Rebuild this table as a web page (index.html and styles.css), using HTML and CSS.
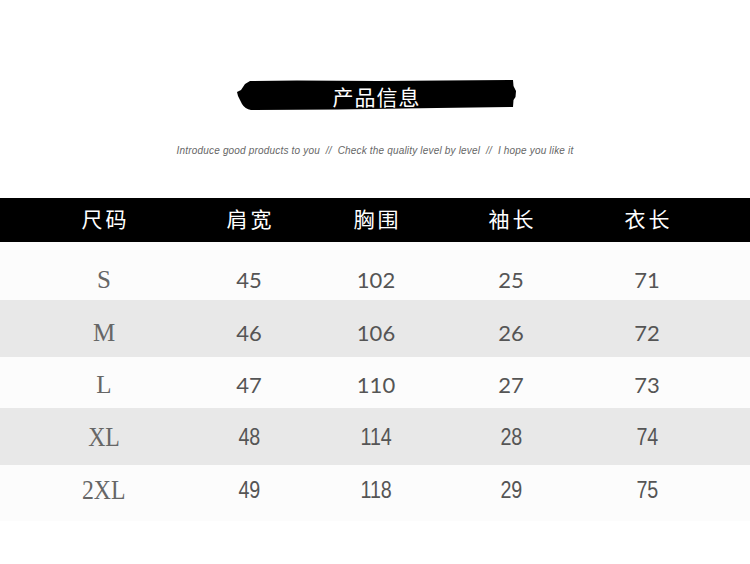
FILE: index.html
```html
<!DOCTYPE html>
<html lang="zh">
<head>
<meta charset="utf-8">
<title>产品信息</title>
<link rel="stylesheet" href="styles.css">
</head>
<body>
<div class="page">
  <div class="banner-wrap">
    <div class="banner">
      <svg class="banner-bg" viewBox="0 0 280 31" preserveAspectRatio="none" aria-hidden="true">
        <path d="M13 1 L60 0.5 L140 1 L276 0 L276.5 6 L279 11 L278.5 17 L276.5 20 L276 27 L200 28 L100 29.5 L14 30 Q8 29 5 24 L1 16 L0 12 L4 10 L8 4 Z" fill="#000"/>
      </svg>
      <span class="banner-text">产品信息</span>
    </div>
  </div>
  <p class="subtitle">Introduce good products to you&nbsp; //&nbsp; Check the quality level by level&nbsp; //&nbsp; I hope you like it</p>

  <div class="table">
    <div class="row head">
      <div class="cell">尺码</div>
      <div class="cell">肩宽</div>
      <div class="cell">胸围</div>
      <div class="cell">袖长</div>
      <div class="cell">衣长</div>
    </div>
    <div class="row r1">
      <div class="cell size">S</div>
      <div class="cell num">45</div>
      <div class="cell num">102</div>
      <div class="cell num">25</div>
      <div class="cell num">71</div>
    </div>
    <div class="row r2 alt">
      <div class="cell size">M</div>
      <div class="cell num">46</div>
      <div class="cell num">106</div>
      <div class="cell num">26</div>
      <div class="cell num">72</div>
    </div>
    <div class="row r3">
      <div class="cell size">L</div>
      <div class="cell num">47</div>
      <div class="cell num">110</div>
      <div class="cell num">27</div>
      <div class="cell num">73</div>
    </div>
    <div class="row r4 alt narrow">
      <div class="cell size"><span>XL</span></div>
      <div class="cell num"><span>48</span></div>
      <div class="cell num"><span>114</span></div>
      <div class="cell num"><span>28</span></div>
      <div class="cell num"><span>74</span></div>
    </div>
    <div class="row r5 narrow">
      <div class="cell size"><span>2XL</span></div>
      <div class="cell num"><span>49</span></div>
      <div class="cell num"><span>118</span></div>
      <div class="cell num"><span>29</span></div>
      <div class="cell num"><span>75</span></div>
    </div>
  </div>
</div>
</body>
</html>
```
FILE: styles.css
```css
html, body {
  margin: 0;
  padding: 0;
  background: #fff;
}
.page {
  width: 750px;
  height: 564px;
  background: #fff;
  overflow: hidden;
}
.banner-wrap {
  padding-top: 80px;
  display: flex;
  justify-content: center;
}
.banner {
  position: relative;
  width: 280px;
  height: 31px;
  margin-left: 3px;
  display: flex;
  align-items: center;
  justify-content: center;
}
.banner-bg {
  position: absolute;
  left: 0;
  top: 0;
  width: 100%;
  height: 100%;
}
.banner-text {
  position: relative;
  color: #fff;
  font-family: "Noto Sans CJK SC", sans-serif;
  font-size: 21px;
  letter-spacing: 1px;
  line-height: 1;
  margin-top: 1px;
}
.subtitle {
  margin: 34px 0 0;
  text-align: center;
  font-family: "Liberation Sans", Arial, sans-serif;
  font-style: italic;
  font-size: 10px;
  letter-spacing: 0.18px;
  line-height: 12px;
  color: #666;
  height: 12px;
}
.table {
  margin-top: 41px;
}
.row {
  display: grid;
  grid-template-columns: 208px 82px 172px 98px 174px 1fr;
  background: #fcfcfc;
}
.row.alt {
  background: #e8e8e8;
}
.cell {
  text-align: center;
  white-space: nowrap;
}
.head {
  background: #000;
  height: 44px;
  align-items: center;
}
.head .cell {
  color: #fff;
  font-family: "Noto Sans CJK SC", sans-serif;
  font-size: 21px;
  letter-spacing: 3px;
  padding-left: 3px;
  line-height: 1;
  margin-top: -4px;
}
.size {
  font-family: "Liberation Serif", "Times New Roman", serif;
  font-size: 25px;
  color: #666;
  line-height: 30px;
}
.num {
  font-family: "Lato", "Open Sans", sans-serif;
  font-weight: 400;
  font-size: 22px;
  color: #555;
  line-height: 30px;
}
.r1 { height: 58px; padding-top: 23px; box-sizing: border-box; }
.r2 { height: 57px; padding-top: 18px; box-sizing: border-box; }
.r3 { height: 51px; padding-top: 13px; box-sizing: border-box; }
.r4 { height: 57px; padding-top: 14px; box-sizing: border-box; }
.r5 { height: 56px; padding-top: 10px; box-sizing: border-box; }
.narrow .cell span {
  display: inline-block;
  transform: scaleX(0.82);
}
.narrow .num {
  font-family: "Liberation Sans", Arial, sans-serif;
  font-weight: 400;
  font-size: 24px;
  color: #555;
}
.narrow .size {
  font-size: 27px;
}
.narrow .size span {
  transform: scaleX(0.88);
}
```
